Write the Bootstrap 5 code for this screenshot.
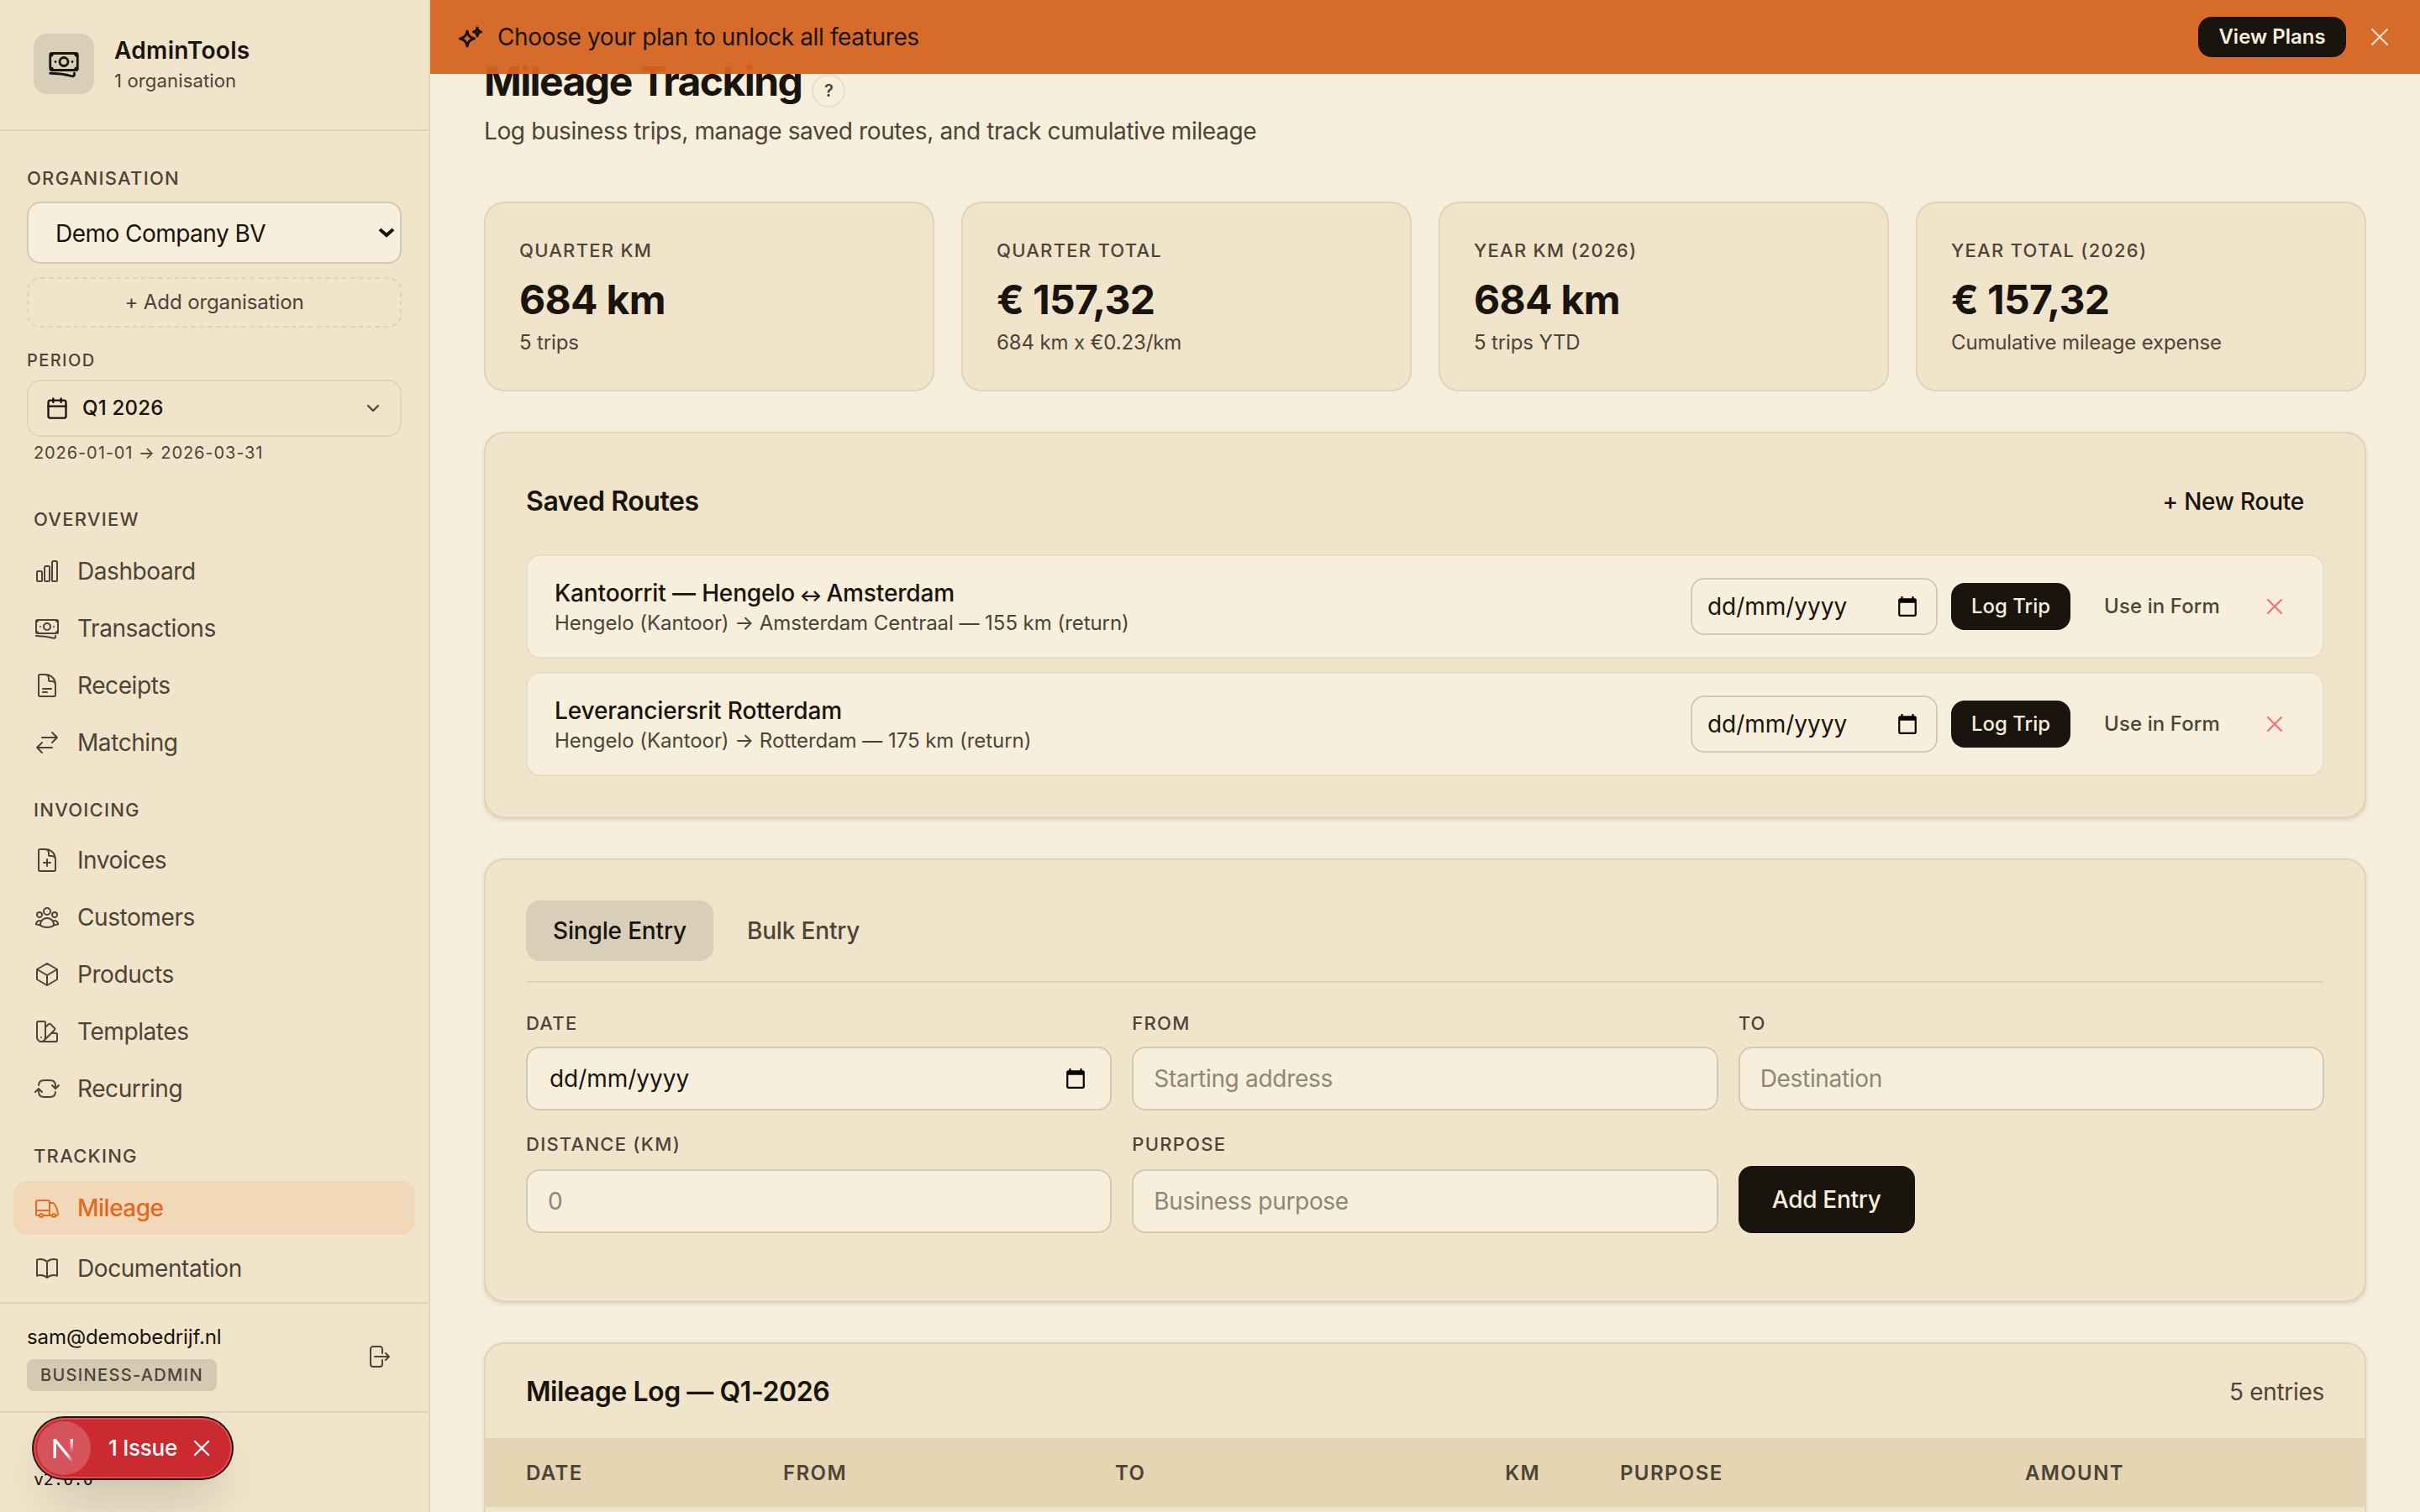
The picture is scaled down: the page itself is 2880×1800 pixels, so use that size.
<!DOCTYPE html>
<html lang="en">
<head>
<meta charset="utf-8">
<title>Mileage Tracking</title>
<link href="https://cdn.jsdelivr.net/npm/bootstrap@5.3.0/dist/css/bootstrap.min.css" rel="stylesheet">
<script src="https://cdn.jsdelivr.net/npm/bootstrap@5.3.0/dist/js/bootstrap.bundle.min.js"></script>
<style>
:root{--ink:#19140d;--muted:#4d4439;--page:#f7eedc;--panel:#f0e4ca;--line:#e0d4ba;--edge:#d4c9b5;--accent:#e26a1f}
body{font-family:Inter,"Liberation Sans",sans-serif;font-size:28px;letter-spacing:-.011em;color:var(--ink);background:var(--page);height:1800px}
svg{flex:none;fill:none;stroke:currentColor;stroke-width:1.5;stroke-linecap:round;stroke-linejoin:round}
.tm{color:var(--muted)}
.t24{font-size:24px;letter-spacing:-.004em}
.caps{font-size:22px;line-height:32px;font-weight:500;letter-spacing:.057em;text-transform:uppercase;color:var(--muted)}
/* sidebar */
.side{width:512px;background:var(--panel);border-right:2px solid var(--line)}
.brandbar{height:156px;padding:40px;gap:24px;border-bottom:2px solid var(--line)}
.logo{width:72px;height:72px;border-radius:16px;background:#d9ceb7}
.logo svg{stroke-width:1.7}
.brandbar .nm{line-height:40px;font-weight:600;letter-spacing:.012em}
.brandbar .sb{font-size:22px;line-height:33px;letter-spacing:.007em}
.picker{padding:40px 32px 0}
.orgsel{height:74px;margin-top:12px;padding:2px 6px 0 32px;border:2px solid var(--edge);border-radius:16px;background:var(--page);letter-spacing:-.019em}
.addorg{height:60px;margin-top:16px;border:2px dashed var(--line);border-radius:16px}
.caps.sm{font-size:20px;letter-spacing:.07em;margin:23px 0 7px}
.period{height:68px;padding:0 24px 0 20px;border:2px solid var(--line);border-radius:16px;font-size:24px;font-weight:500;letter-spacing:.01em;gap:16px}
.range{font-size:20px;line-height:32px;letter-spacing:.045em;padding-left:8px;margin-top:3px}
.menu{padding:0 16px}
.menu .caps{padding-left:24px;margin:32px 0 14px}
.menu .caps:first-child{margin-top:47px}
.menu .caps.tight{margin-bottom:12px}
.item{height:64px;padding:0 24px;gap:20px;border-radius:16px;color:var(--muted);margin-bottom:4px;letter-spacing:-.015em}
.item.on{background:#f0d8b9;color:var(--accent);font-weight:500;letter-spacing:-.018em}
.user{height:130px;padding:0 44px 2px 32px;border-top:2px solid var(--line)}
.user .mail{line-height:36px}
.role{height:38px;margin-top:8px;padding:0 16px;border-radius:8px;background:#d5c9b1;font-size:20px;font-weight:500;letter-spacing:.066em}
.foot{height:120px;border-top:2px solid var(--line);padding:63px 0 0 40px;font:20px/32px "DejaVu Sans Mono",monospace}
.pill{left:40px;top:1688px;width:236px;height:72px;padding:4px 26px 4px 4px;border-radius:36px;background:#ca2a30;color:#fff;box-shadow:0 0 0 2px #171717,inset 0 0 0 2px #e5484d,0 32px 64px -16px rgba(0,0,0,.22),0 8px 16px -8px rgba(0,0,0,.06);font-size:26px;font-weight:500;letter-spacing:-.01em}
.pill .disc{width:64px;height:64px;border-radius:50%;background:#d5535a}
.pill .disc svg{stroke-width:3.4;stroke-linecap:butt;stroke-linejoin:miter}
.pill .cnt{margin-left:21px;padding-bottom:2px}
/* banner */
.promo{left:512px;right:0;top:0;height:88px;padding:0 30px 0 32px;background:rgba(213,100,32,.955);gap:16px;letter-spacing:-.013em}
.promo .bye{color:#f8dfca;margin-left:6px}
.btnx{background:var(--ink);color:var(--page);border-radius:16px;font-size:24px;letter-spacing:0}
.promo .btnx{width:176px;height:48px;font-weight:600}
/* content */
.content{padding:67px 64px 0 64px}
h1{font-size:48px;line-height:60px;font-weight:700;letter-spacing:-.0325em;margin:0}
.help{width:40px;height:40px;border:2px solid #e8dfcb;border-radius:50%;font-size:20px;font-weight:600;margin:21px 0 -2px 12px}
.lede{line-height:42px;margin-top:8px;letter-spacing:-.0135em}
.stats{gap:32px;margin-top:63px}
.stat{height:226px;padding:40px;border:2px solid var(--line);border-radius:24px;background:var(--panel)}
.stat .val{font-size:48px;line-height:60px;font-weight:700;letter-spacing:-.014em;margin-top:13px}
.stat .sub{line-height:34px;margin-top:4px;letter-spacing:-.006em}
.sheet{border:2px solid var(--line);border-radius:24px;background:var(--panel);box-shadow:0 2px 6px rgba(25,20,13,.1),0 2px 4px -2px rgba(25,20,13,.1);margin-top:48px}
.sheet-top{height:66px;margin-bottom:30px}
.newroute{padding-right:24px;font-weight:500;letter-spacing:-.009em}
.ttl{font-size:32px;font-weight:600;letter-spacing:-.0135em}
.route{height:124px;padding:0 32px;border:2px solid #e6dcc8;border-radius:16px;background:var(--page);gap:16px}
.route .info{padding-top:4px}
.route .nm{line-height:36px;font-weight:500;letter-spacing:-.005em}
.route .swap{font-size:20px;font-weight:700;margin:0 -2px;line-height:1}
.route .sub{line-height:36px;letter-spacing:-.002em}
.field{border:2px solid var(--edge);border-radius:16px;background:var(--page);letter-spacing:-.001em}
.field svg,.cal{fill:#000;stroke:none}
.route .field{width:294px;height:68px;padding:0 21px 0 18px}
.route .btnx{width:142px;height:56px;font-weight:500}
.use{width:186px;font-weight:500;letter-spacing:.004em}
.kill{width:50px;color:#ff6b6b}
.tab{height:72px;padding:0 32px;border-radius:16px;font-weight:500;letter-spacing:-.006em}
.tab.on{background:#d9ceb7}
.tabs{padding-bottom:24px;border-bottom:2px solid var(--line);gap:8px}
.newentry{height:528px}
.entry{display:grid;grid-template-columns:repeat(3,1fr);column-gap:24px;row-gap:24px;margin-top:32px;align-items:end}
.entry .field{height:76px;width:100%;padding:0 28px 0 24px;font-size:28px;margin-top:12px;color:var(--ink)}
.entry div.field{padding-left:26px}
.entry .low .field{margin-top:14px}
.entry input{letter-spacing:-.011em!important;outline:0}
.entry input::placeholder{color:#8f8676;opacity:1}
.entry .btnx{width:210px;height:80px;font-size:28px;font-weight:500;letter-spacing:-.011em}
.logsheet{height:202px;border-bottom:0;border-radius:24px 24px 0 0}
.log-top{height:114px;padding-top:2px;border-bottom:2px solid var(--line)}
.log{table-layout:fixed}
.log th{height:80px;padding:0 47px 0 48px;font-size:24px;font-weight:600;letter-spacing:.058em;color:var(--muted);background:#e5d5b3;border:0;vertical-align:middle}
</style>
</head>
<body class="d-flex overflow-hidden">
<svg width="0" height="0" class="position-absolute"><defs>
<symbol id="cash" viewBox="0 0 24 24"><path d="M2.25 18.75a60.07 60.07 0 0 1 15.797 2.101c.727.198 1.453-.342 1.453-1.096V18.75M3.75 4.5v.75A.75.75 0 0 1 3 6h-.75m0 0v-.375c0-.621.504-1.125 1.125-1.125H20.25M2.25 6v9m18-10.5v.75c0 .414.336.75.75.75h.75m-1.5-1.5h.375c.621 0 1.125.504 1.125 1.125v9.75c0 .621-.504 1.125-1.125 1.125h-.375m1.5-1.5H21a.75.75 0 0 0-.75.75v.75m0 0H3.75m0 0h-.375a1.125 1.125 0 0 1-1.125-1.125V15m1.5 1.5v-.75A.75.75 0 0 0 3 15h-.75M15 10.5a3 3 0 1 1-6 0 3 3 0 0 1 6 0Zm3 0h.008v.008H18V10.5Zm-12 0h.008v.008H6V10.5Z"/></symbol>
<symbol id="cal" viewBox="0 0 24 24"><path d="M20 3h-1V1h-2v2H7V1H5v2H4c-1.1 0-2 .9-2 2v16c0 1.1.9 2 2 2h16c1.1 0 2-.9 2-2V5c0-1.1-.9-2-2-2zm0 18H4V8h16v13z"/></symbol>
<symbol id="ex" viewBox="0 0 24 24"><path d="M6 18 18 6M6 6l12 12"/></symbol>
</defs></svg>

<aside class="side d-flex flex-column flex-shrink-0">
  <div class="brandbar d-flex align-items-start flex-shrink-0">
    <div class="logo d-flex align-items-center justify-content-center flex-shrink-0"><svg width="40" height="40"><use href="#cash"/></svg></div>
    <div><div class="nm">AdminTools</div><div class="sb tm">1 organisation</div></div>
  </div>
  <div class="picker">
    <div class="caps">Organisation</div>
    <div class="orgsel d-flex align-items-center justify-content-between">Demo Company BV<svg width="20" height="16" viewBox="0 0 20 16" stroke-linecap="butt"><path d="M2 3l8 7 8-7" style="stroke-width:4;stroke-linecap:butt;stroke-linejoin:miter"/></svg></div>
    <div class="addorg d-flex align-items-center justify-content-center tm t24">+ Add organisation</div>
    <div class="caps sm">Period</div>
    <div class="period d-flex align-items-center"><svg width="28" height="28" viewBox="0 0 24 24" style="stroke-width:2"><rect x="3" y="4" width="18" height="18" rx="2"/><path d="M16 2v4M8 2v4M3 10h18"/></svg><span>Q1 2026</span><svg class="ms-auto tm" width="16" height="10" viewBox="0 0 16 10" style="stroke-width:2.2"><path d="M2 2l6 6 6-6"/></svg></div>
    <div class="range tm">2026-01-01 → 2026-03-31</div>
  </div>
  <nav class="menu flex-grow-1">
    <div class="caps">Overview</div>
    <div class="item d-flex align-items-center"><svg width="32" height="32" viewBox="0 0 24 24"><path d="M3 13.125C3 12.504 3.504 12 4.125 12h2.25c.621 0 1.125.504 1.125 1.125v6.75C7.5 20.496 6.996 21 6.375 21h-2.25A1.125 1.125 0 0 1 3 19.875v-6.75ZM9.75 8.625c0-.621.504-1.125 1.125-1.125h2.25c.621 0 1.125.504 1.125 1.125v11.25c0 .621-.504 1.125-1.125 1.125h-2.25a1.125 1.125 0 0 1-1.125-1.125V8.625ZM16.5 4.125c0-.621.504-1.125 1.125-1.125h2.25C20.496 3 21 3.504 21 4.125v15.75c0 .621-.504 1.125-1.125 1.125h-2.25a1.125 1.125 0 0 1-1.125-1.125V4.125Z"/></svg>Dashboard</div>
    <div class="item d-flex align-items-center"><svg width="32" height="32"><use href="#cash"/></svg>Transactions</div>
    <div class="item d-flex align-items-center"><svg width="32" height="32" viewBox="0 0 24 24"><path d="M19.5 14.25v-2.625a3.375 3.375 0 0 0-3.375-3.375h-1.5A1.125 1.125 0 0 1 13.5 7.125v-1.5a3.375 3.375 0 0 0-3.375-3.375H8.25m0 12.75h7.5m-7.5 3H12M10.5 2.25H5.625c-.621 0-1.125.504-1.125 1.125v17.25c0 .621.504 1.125 1.125 1.125h12.75c.621 0 1.125-.504 1.125-1.125V11.25a9 9 0 0 0-9-9Z"/></svg>Receipts</div>
    <div class="item d-flex align-items-center mb-0"><svg width="32" height="32" viewBox="0 0 24 24"><path d="M7.5 21 3 16.5m0 0L7.5 12M3 16.5h13.5m0-13.5L21 7.5m0 0L16.5 12M21 7.5H7.5"/></svg>Matching</div>
    <div class="caps tight">Invoicing</div>
    <div class="item d-flex align-items-center"><svg width="32" height="32" viewBox="0 0 24 24"><path d="M19.5 14.25v-2.625a3.375 3.375 0 0 0-3.375-3.375h-1.5A1.125 1.125 0 0 1 13.5 7.125v-1.5a3.375 3.375 0 0 0-3.375-3.375H8.25m3.75 9v6m3-3H9m1.5-12H5.625c-.621 0-1.125.504-1.125 1.125v17.25c0 .621.504 1.125 1.125 1.125h12.75c.621 0 1.125-.504 1.125-1.125V11.25a9 9 0 0 0-9-9Z"/></svg>Invoices</div>
    <div class="item d-flex align-items-center"><svg width="32" height="32" viewBox="0 0 24 24"><path d="M18 18.72a9.094 9.094 0 0 0 3.741-.479 3 3 0 0 0-4.682-2.72m.94 3.198.001.031c0 .225-.012.447-.037.666A11.944 11.944 0 0 1 12 21c-2.17 0-4.207-.576-5.963-1.584A6.062 6.062 0 0 1 6 18.719m12 0a5.971 5.971 0 0 0-.941-3.197m0 0A5.995 5.995 0 0 0 12 12.75a5.995 5.995 0 0 0-5.058 2.772m0 0a3 3 0 0 0-4.681 2.72 8.986 8.986 0 0 0 3.74.477m.94-3.197a5.971 5.971 0 0 0-.94 3.197M15 6.75a3 3 0 1 1-6 0 3 3 0 0 1 6 0Zm6 3a2.25 2.25 0 1 1-4.5 0 2.25 2.25 0 0 1 4.5 0Zm-13.5 0a2.25 2.25 0 1 1-4.5 0 2.25 2.25 0 0 1 4.5 0Z"/></svg>Customers</div>
    <div class="item d-flex align-items-center"><svg width="32" height="32" viewBox="0 0 24 24"><path d="m21 7.5-9-5.25L3 7.5m18 0-9 5.25m9-5.25v9l-9 5.25M3 7.5l9 5.25M3 7.5v9l9 5.25m0-9v9"/></svg>Products</div>
    <div class="item d-flex align-items-center"><svg width="32" height="32" viewBox="0 0 24 24"><path d="M4.098 19.902a3.75 3.75 0 0 0 5.304 0l6.401-6.402M6.75 21A3.75 3.75 0 0 1 3 17.25V4.125C3 3.504 3.504 3 4.125 3h5.25c.621 0 1.125.504 1.125 1.125v4.072M6.75 21a3.75 3.75 0 0 0 3.75-3.75V8.197M6.75 21h13.125c.621 0 1.125-.504 1.125-1.125v-5.25c0-.621-.504-1.125-1.125-1.125h-4.072M10.5 8.197l2.88-2.88c.438-.439 1.15-.439 1.59 0l3.712 3.713c.44.44.44 1.152 0 1.59l-2.879 2.88M6.75 17.25h.008v.008H6.75v-.008Z"/></svg>Templates</div>
    <div class="item d-flex align-items-center mb-0"><svg width="32" height="32" viewBox="0 0 24 24"><path d="M19.5 12c0-1.232-.046-2.453-.138-3.662a4.006 4.006 0 0 0-3.7-3.7 48.678 48.678 0 0 0-7.324 0 4.006 4.006 0 0 0-3.7 3.7c-.017.22-.032.441-.046.662M19.5 12l3-3m-3 3-3-3m-12 3c0 1.232.046 2.453.138 3.662a4.006 4.006 0 0 0 3.7 3.7 48.656 48.656 0 0 0 7.324 0 4.006 4.006 0 0 0 3.7-3.7c.017-.22.032-.441.046-.662M4.5 12l3 3m-3-3-3 3"/></svg>Recurring</div>
    <div class="caps">Tracking</div>
    <div class="item on d-flex align-items-center mb-2"><svg width="32" height="32" viewBox="0 0 24 24"><path d="M8.25 18.75a1.5 1.5 0 0 1-3 0m3 0a1.5 1.5 0 0 0-3 0m3 0h6m-9 0H3.375a1.125 1.125 0 0 1-1.125-1.125V14.25m17.25 4.5a1.5 1.5 0 0 1-3 0m3 0a1.5 1.5 0 0 0-3 0m3 0h1.125c.621 0 1.129-.504 1.09-1.124a17.902 17.902 0 0 0-3.213-9.193 2.056 2.056 0 0 0-1.58-.86H14.25M16.5 18.75h-2.25m0-11.177v-.958c0-.568-.422-1.048-.987-1.106a48.554 48.554 0 0 0-10.026 0 1.106 1.106 0 0 0-.987 1.106v7.635m12-6.677v6.677m0 4.5v-4.5m0 0h-12"/></svg>Mileage</div>
    <div class="item d-flex align-items-center mb-0"><svg width="32" height="32" viewBox="0 0 24 24"><path d="M12 6.042A8.967 8.967 0 0 0 6 3.75c-1.052 0-2.062.18-3 .512v14.25A8.987 8.987 0 0 1 6 18c2.305 0 4.408.867 6 2.292m0-14.25a8.966 8.966 0 0 1 6-2.292c1.052 0 2.062.18 3 .512v14.25A8.987 8.987 0 0 0 18 18a8.967 8.967 0 0 0-6 2.292m0-14.25v14.25"/></svg>Documentation</div>
  </nav>
  <div class="user d-flex align-items-center justify-content-between flex-shrink-0">
    <div class="d-flex flex-column align-items-start"><div class="mail t24">sam@demobedrijf.nl</div><div class="role tm d-flex align-items-center">BUSINESS-ADMIN</div></div>
    <svg class="tm" width="32" height="32" viewBox="0 0 24 24"><path d="M15.75 9V5.25A2.25 2.25 0 0 0 13.5 3h-6a2.25 2.25 0 0 0-2.25 2.25v13.5A2.25 2.25 0 0 0 7.5 21h6a2.25 2.25 0 0 0 2.25-2.25V15m3 0 3-3m0 0-3-3m3 3H9"/></svg>
  </div>
  <div class="foot flex-shrink-0">v2.0.0</div>
</aside>

<div class="pill position-absolute d-flex align-items-center">
  <div class="disc d-flex align-items-center justify-content-center flex-shrink-0"><svg width="32" height="32" viewBox="0 0 32 32"><defs><linearGradient id="f1" gradientUnits="userSpaceOnUse" x1="16" y1="18" x2="27" y2="31"><stop offset=".35" stop-color="#fff"/><stop offset="1" stop-color="#fff" stop-opacity="0"/></linearGradient><linearGradient id="f2" gradientUnits="userSpaceOnUse" x1="0" y1="5" x2="0" y2="21"><stop offset="0" stop-color="#fff"/><stop offset="1" stop-color="#fff" stop-opacity="0"/></linearGradient></defs><path d="M5.200 28V5" stroke="#fff"/><path d="M5 5.500L26.500 32" stroke="url(#f1)"/><rect x="23.600" y="5" width="3.400" height="15.500" fill="url(#f2)" stroke="none"/></svg></div>
  <span class="cnt">1 Issue</span>
  <svg class="ms-auto" width="20" height="20" viewBox="0 0 20 20" style="stroke-width:2.4"><path d="M2 2l16 16M18 2L2 18"/></svg>
</div>

<div class="promo position-absolute z-3 d-flex align-items-center">
  <svg width="32" height="32" viewBox="0 0 32 32" style="stroke-width:3"><path d="M12 9Q13 16.500 20.500 18Q13 19.500 12 27Q11 19.500 3.500 18Q11 16.500 12 9Z"/><path d="M24 5Q24.500 9.500 28.500 10Q24.500 10.500 24 15Q23.500 10.500 19.500 10Q23.500 9.500 24 5Z"/></svg>
  <span>Choose your plan to unlock all features</span>
  <div class="btnx ms-auto d-flex align-items-center justify-content-center">View Plans</div>
  <svg class="bye" width="36" height="36"><use href="#ex"/></svg>
</div>

<main class="content flex-grow-1">
  <div class="d-flex align-items-start"><h1>Mileage Tracking</h1><div class="help tm d-flex align-items-center justify-content-center">?</div></div>
  <div class="lede tm">Log business trips, manage saved routes, and track cumulative mileage</div>

  <div class="stats d-flex">
    <div class="stat flex-fill w-25"><div class="caps">Quarter km</div><div class="val">684 km</div><div class="sub t24 tm">5 trips</div></div>
    <div class="stat flex-fill w-25"><div class="caps">Quarter total</div><div class="val">€ 157,32</div><div class="sub t24 tm">684 km x €0.23/km</div></div>
    <div class="stat flex-fill w-25"><div class="caps">Year km (2026)</div><div class="val">684 km</div><div class="sub t24 tm">5 trips YTD</div></div>
    <div class="stat flex-fill w-25"><div class="caps">Year total (2026)</div><div class="val">€ 157,32</div><div class="sub t24 tm">Cumulative mileage expense</div></div>
  </div>

  <section class="sheet p-5">
    <div class="sheet-top d-flex align-items-center justify-content-between"><div class="ttl">Saved Routes</div><div class="newroute">+ New Route</div></div>
    <div class="d-flex flex-column gap-3">
      <div class="route d-flex align-items-center">
        <div class="info me-auto"><div class="nm">Kantoorrit — Hengelo <span class="swap">↔</span> Amsterdam</div><div class="sub t24 tm">Hengelo (Kantoor) → Amsterdam Centraal — 155 km (return)</div></div>
        <div class="field d-flex align-items-center justify-content-between">dd/mm/yyyy<svg class="cal" width="26" height="26"><use href="#cal"/></svg></div>
        <div class="btnx d-flex align-items-center justify-content-center">Log Trip</div>
        <div class="use t24 tm text-center">Use in Form</div>
        <div class="kill d-flex justify-content-center"><svg width="32" height="32"><use href="#ex"/></svg></div>
      </div>
      <div class="route d-flex align-items-center">
        <div class="info me-auto"><div class="nm">Leveranciersrit Rotterdam</div><div class="sub t24 tm">Hengelo (Kantoor) → Rotterdam — 175 km (return)</div></div>
        <div class="field d-flex align-items-center justify-content-between">dd/mm/yyyy<svg class="cal" width="26" height="26"><use href="#cal"/></svg></div>
        <div class="btnx d-flex align-items-center justify-content-center">Log Trip</div>
        <div class="use t24 tm text-center">Use in Form</div>
        <div class="kill d-flex justify-content-center"><svg width="32" height="32"><use href="#ex"/></svg></div>
      </div>
    </div>
  </section>

  <section class="sheet newentry p-5">
    <div class="tabs d-flex"><div class="tab on d-flex align-items-center">Single Entry</div><div class="tab tm d-flex align-items-center">Bulk Entry</div></div>
    <div class="entry">
      <div><div class="caps">Date</div><div class="field d-flex align-items-center justify-content-between">dd/mm/yyyy<svg class="cal" width="26" height="26"><use href="#cal"/></svg></div></div>
      <div><div class="caps">From</div><input class="field" placeholder="Starting address"></div>
      <div><div class="caps">To</div><input class="field" placeholder="Destination"></div>
      <div class="low"><div class="caps">Distance (km)</div><input class="field" placeholder="0"></div>
      <div class="low"><div class="caps">Purpose</div><input class="field" placeholder="Business purpose"></div>
      <div class="btnx d-flex align-items-center justify-content-center">Add Entry</div>
    </div>
  </section>

  <section class="sheet logsheet overflow-hidden">
    <div class="log-top d-flex align-items-center justify-content-between px-5"><div class="ttl">Mileage Log — Q1-2026</div><div class="tm">5 entries</div></div>
    <table class="log table mb-0">
      <colgroup><col style="width:306px"><col style="width:395px"><col style="width:440px"><col style="width:161px"><col style="width:400px"><col style="width:295px"><col></colgroup>
      <thead><tr><th>DATE</th><th>FROM</th><th>TO</th><th class="text-end">KM</th><th>PURPOSE</th><th class="text-end">AMOUNT</th><th></th></tr></thead>
    </table>
  </section>
</main>
</body>
</html>
